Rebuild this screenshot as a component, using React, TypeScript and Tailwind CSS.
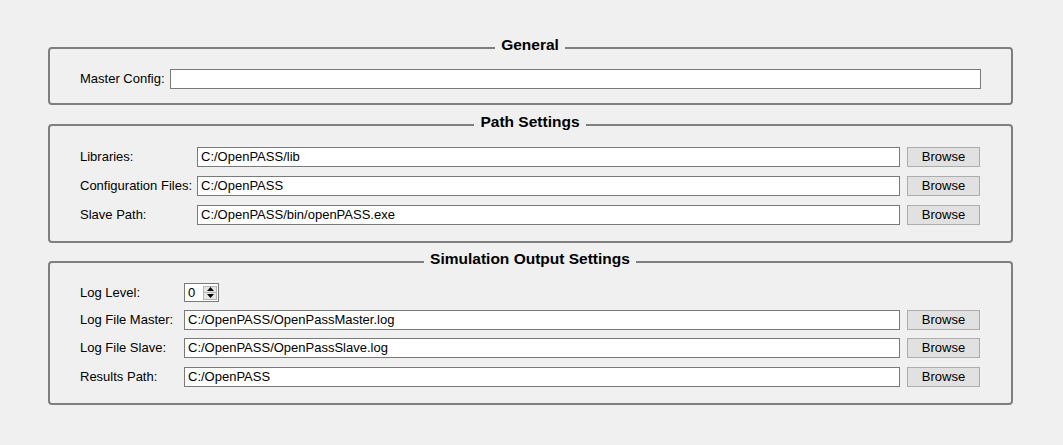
import React from "react";

const font = "font-['Liberation_Sans',Arial,sans-serif]";

function Group({ title, className, children }: { title: string; className?: string; children: React.ReactNode }) {
  return (
    <fieldset className={`border-2 border-[#7f7f7f] rounded-[4px] pl-[30px] pr-[31px] ${className ?? ""}`}>
      <legend className="mx-auto px-[6px] pb-[6px] text-[15.5px] leading-[12px] font-bold text-black">{title}</legend>
      {children}
    </fieldset>
  );
}

function TextBox({ value = "", className = "" }: { value?: string; className?: string }) {
  return (
    <div className={`flex-1 h-[20px] bg-white border border-[#7a7a7a] pl-[3px] flex items-center text-[13px] text-black whitespace-nowrap overflow-hidden ${className}`}>
      {value}
    </div>
  );
}

function Browse() {
  return (
    <button className="ml-[7px] w-[73px] h-[20px] bg-[#e1e1e1] border border-[#adadad] text-[13px] text-black flex items-center justify-center">
      Browse
    </button>
  );
}

function Row({ label, labelW, value, className = "" }: { label: string; labelW: string; value: string; className?: string }) {
  return (
    <div className={`flex items-center h-[20px] ${className}`}>
      <div className={`${labelW} shrink-0 text-[13px] text-black`}>{label}</div>
      <TextBox value={value} />
      <Browse />
    </div>
  );
}

function SpinBox({ value }: { value: number }) {
  return (
    <div className="w-[35px] h-[19px] bg-white border border-[#7a7a7a] flex items-center justify-between pl-[3px] pr-[1px]">
      <span className="text-[13px] text-black leading-none">{value}</span>
      <div className="w-[14px] h-[14px] bg-[#e6e6e6] border border-[#b5b5b5] flex flex-col">
        <div className="flex-1 flex items-center justify-center border-b border-[#b5b5b5]">
          <svg width="7" height="4" viewBox="0 0 7 4"><path d="M0 4 L3.5 0 L7 4 Z" fill="#000" /></svg>
        </div>
        <div className="flex-1 flex items-center justify-center">
          <svg width="7" height="4" viewBox="0 0 7 4"><path d="M0 0 L3.5 4 L7 0 Z" fill="#000" /></svg>
        </div>
      </div>
    </div>
  );
}

export default function App() {
  return (
    <div className={`${font} bg-[#f0f0f0] w-full h-[445px] pt-[39px] pl-[48px] pr-[50px] flex flex-col`}>
      <Group title="General" className="pt-[12px] pb-[14px]">
        <div className="flex items-center h-[20px]">
          <div className="w-[90px] shrink-0 text-[13px] text-black">Master Config:</div>
          <TextBox className="-mr-[1px]" />
        </div>
      </Group>

      <Group title="Path Settings" className="mt-[11px] pt-[13px] pb-[16px]">
        <div className="flex flex-col gap-[9px]">
          <Row label="Libraries:" labelW="w-[117px]" value="C:/OpenPASS/lib" />
          <Row label="Configuration Files:" labelW="w-[117px]" value="C:/OpenPASS" />
          <Row label="Slave Path:" labelW="w-[117px]" value="C:/OpenPASS/bin/openPASS.exe" />
        </div>
      </Group>

      <Group title="Simulation Output Settings" className="mt-[10px] pt-[12px] pb-[16px]">
        <div className="flex flex-col gap-[8px]">
          <div className="flex items-center h-[19px]">
            <div className="w-[104px] shrink-0 text-[13px] text-black">Log Level:</div>
            <SpinBox value={0} />
          </div>
          <Row label="Log File Master:" labelW="w-[104px]" value="C:/OpenPASS/OpenPassMaster.log" />
          <Row label="Log File Slave:" labelW="w-[104px]" value="C:/OpenPASS/OpenPassSlave.log" />
          <Row label="Results Path:" labelW="w-[104px]" value="C:/OpenPASS" className="mt-[1px]" />
        </div>
      </Group>
    </div>
  );
}
